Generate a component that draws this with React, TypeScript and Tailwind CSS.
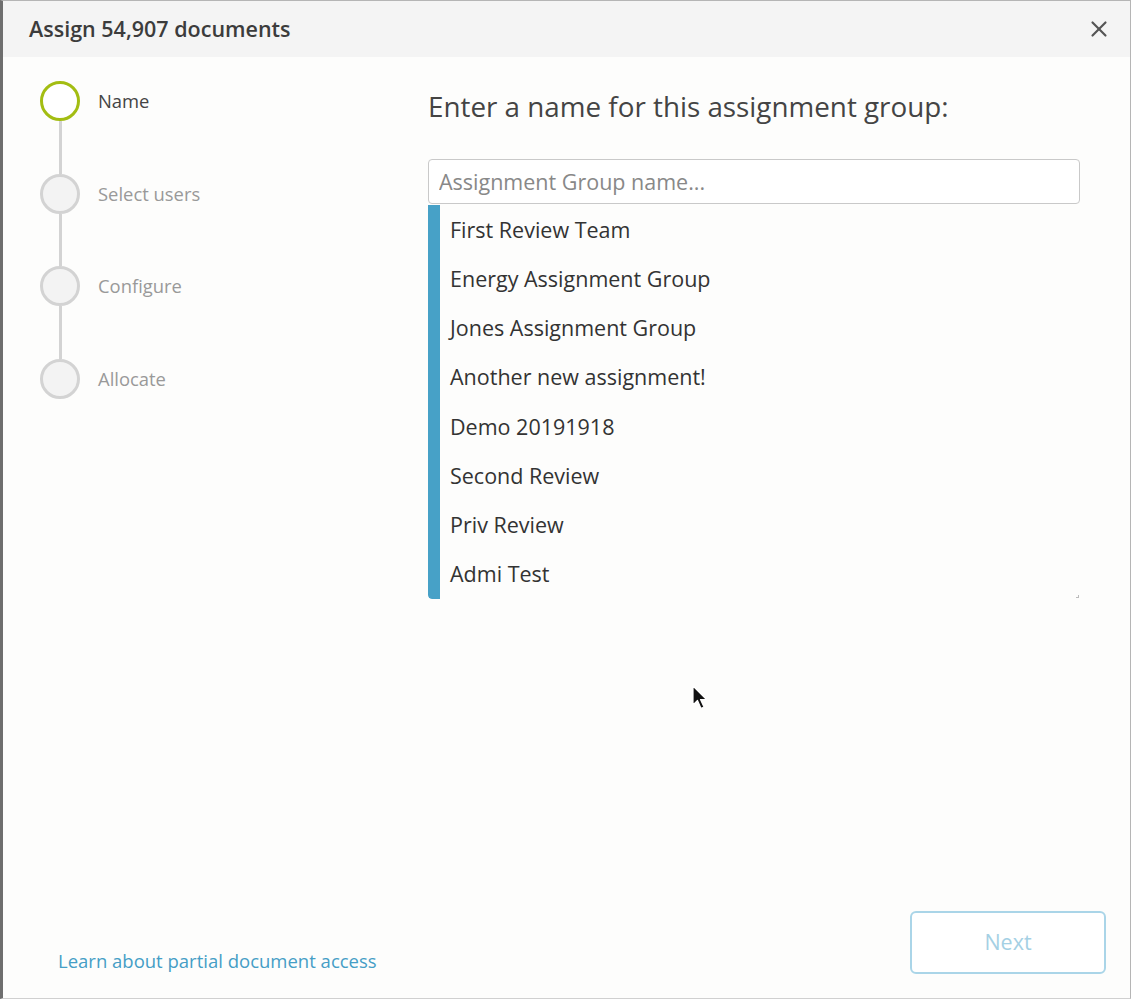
import { X } from "lucide-react";

const STEPS = ["Name", "Select users", "Configure", "Allocate"];

const GROUPS = [
  "First Review Team",
  "Energy Assignment Group",
  "Jones Assignment Group",
  "Another new assignment!",
  "Demo 20191918",
  "Second Review",
  "Priv Review",
  "Admi Test",
];

function Stepper() {
  return (
    <div className="flex flex-col">
      {STEPS.map((step, i) => (
        <div key={step} className="flex flex-col">
          {i > 0 && <div className="ml-[19px] h-[52.5px] w-[3px] bg-[#d3d3d3]" />}
          <div className="flex items-center gap-[18px]">
            <div
              className={
                i === 0
                  ? "h-[40px] w-[40px] rounded-full border-[3px] border-[#a3bd12] bg-white"
                  : "h-[40px] w-[40px] rounded-full border-[3px] border-[#d3d3d3] bg-[#f3f3f3]"
              }
            />
            <span
              className={
                i === 0 ? "text-[18.4px] text-[#444]" : "text-[18.4px] text-[#999]"
              }
            >
              {step}
            </span>
          </div>
        </div>
      ))}
    </div>
  );
}

function Cursor() {
  return (
    <svg
      className="absolute left-[688px] top-[684px]"
      width="18"
      height="26"
      viewBox="0 0 18 26"
    >
      <path
        d="M2 1 L2 20 L6.5 15.5 L10 23.5 L13 22 L9.5 14.5 L15.5 14.5 Z"
        fill="#111"
        stroke="#fff"
        strokeWidth="1.2"
        strokeLinejoin="round"
      />
    </svg>
  );
}

export default function App() {
  return (
    <div
      className="relative flex h-[999px] w-[1131px] flex-col border-t border-r border-b border-l-[3px] border-t-[#b5b5b5] border-r-[#b5b5b5] border-b-[#d0d0d0] border-l-[#6e6e6e] bg-[#fdfdfc]"
      style={{ fontFamily: '"Open Sans", "Noto Sans", sans-serif' }}
    >
      {/* header */}
      <div className="flex h-[56px] shrink-0 items-center justify-between bg-[#f4f4f4] pl-[26px] pr-[18px]">
        <h1 className="text-[21.5px] font-semibold text-[#3c3c3c]">
          Assign 54,907 documents
        </h1>
        <X className="h-[26px] w-[26px] text-[#555]" strokeWidth={2} />
      </div>

      {/* body */}
      <div className="flex flex-1 flex-col">
        <div className="flex flex-1">
          <div className="w-[425px] shrink-0 pl-[37px] pt-[24px]">
            <Stepper />
          </div>
          <div className="flex w-[652px] flex-col pt-[30px]">
            <h2 className="text-[27.8px] leading-[38px] text-[#444]">
              Enter a name for this assignment group:
            </h2>
            <input
              className="mt-[34px] h-[45px] w-full rounded-[4px] border border-[#c9c9c9] bg-white px-[10px] text-[21.5px] text-[#333] placeholder:text-[#888] outline-none"
              placeholder="Assignment Group name..."
              style={{ fontFamily: '"Open Sans", "Noto Sans", sans-serif' }}
            />
            <div className="relative mt-[1px] flex h-[394px] overflow-hidden rounded-bl-[4px] bg-[#fdfdfc]">
              <div className="w-[12px] shrink-0 rounded-bl-[4px] bg-[#47a1c7]" />
              <ul className="flex flex-1 flex-col">
                {GROUPS.map((g) => (
                  <li
                    key={g}
                    className="flex h-[49.4px] items-center pl-[10px] text-[21.5px] text-[#333]"
                  >
                    {g}
                  </li>
                ))}
              </ul>
              <span className="absolute right-[1px] bottom-[1px] h-[3px] w-[3px] border-r border-b border-[#bbb]" />
            </div>
          </div>
        </div>

        {/* footer */}
        <div className="flex items-end justify-between pb-[24px] pl-[55px] pr-[24px]">
          <a className="mb-[1px] text-[18.5px] leading-[24px] text-[#459ec6]" href="#">
            Learn about partial document access
          </a>
          <button className="h-[63px] w-[196px] rounded-[6px] border-2 border-[#aad5e8] bg-white text-[21.5px] text-[#a4d0e4]">
            Next
          </button>
        </div>
      </div>

      <Cursor />
    </div>
  );
}
